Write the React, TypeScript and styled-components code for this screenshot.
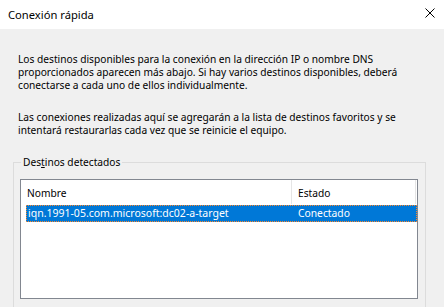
import React from "react";
import styled, { createGlobalStyle } from "styled-components";

const Global = createGlobalStyle`
  html, body { margin: 0; padding: 0; }
  body {
    width: 444px;
    height: 307px;
    overflow: hidden;
    background: #f0f0f0;
    font-family: "Noto Sans", "Liberation Sans", sans-serif;
    font-size: 10.2px;
    color: #000;
  }
`;

const Window = styled.div`
  width: 444px;
  height: 307px;
  display: flex;
  flex-direction: column;
  background: #f0f0f0;
  overflow: hidden;
`;

const TitleBar = styled.div`
  height: 29px;
  flex: none;
  background: #fff;
  display: flex;
  align-items: center;
  justify-content: space-between;
  padding: 0 8px;
`;

const Title = styled.span`
  font-size: 11.2px;
  line-height: 16px;
`;

const CloseBox = styled.span`
  width: 10px;
  height: 10px;
  margin-right: 1px;
  margin-bottom: 3px;
  display: flex;
`;

const Body = styled.div`
  padding: 24px 0 0 0;
  display: flex;
  flex-direction: column;
`;

const Paragraph = styled.p<{ $gap?: number }>`
  margin: 0 0 ${(p) => p.$gap ?? 0}px 18px;
  line-height: 13px;
  font-size: 10.2px;
  white-space: nowrap;
`;

const Group = styled.fieldset`
  margin: 0 18px 0 13px;
  padding: 0 7px 0 6px;
  border: 1px solid #dcdcdc;
  height: 160px;
  box-sizing: border-box;
  min-width: 0;
`;

const Legend = styled.legend`
  padding: 0 2px;
  margin-left: 1px;
  font-size: 10.2px;
  line-height: 14px;
`;

const ListView = styled.div`
  margin-top: 10px;
  height: 120px;
  box-sizing: border-box;
  border: 1px solid #828790;
  background: #fff;
  display: flex;
  flex-direction: column;
`;

const HeaderRow = styled.div`
  display: flex;
  height: 24px;
  flex: none;
`;

const HeaderCell = styled.div<{ $w: number }>`
  width: ${(p) => p.$w}px;
  flex: none;
  box-sizing: border-box;
  border-right: 1px solid #e5e5e5;
  padding: 1px 0 0 6px;
  display: flex;
  align-items: center;
  font-size: 10.2px;
`;

const Row = styled.div`
  display: flex;
  margin: 1px 0 0 5px;
  height: 17px;
  width: 391px;
  box-sizing: border-box;
  background: #0078d7;
  border: 1px dotted #ff8728;
  color: #fff;
`;

const Cell = styled.div<{ $w: number; $pad: number; $size: number }>`
  width: ${(p) => p.$w}px;
  flex: none;
  box-sizing: border-box;
  padding-left: ${(p) => p.$pad}px;
  font-size: ${(p) => p.$size}px;
  line-height: 15px;
  white-space: nowrap;
`;

export default function App() {
  return (
    <Window>
      <Global />
      <TitleBar>
        <Title>Conexión rápida</Title>
        <CloseBox>
          <svg width="10" height="10" viewBox="0 0 10 10">
            <path d="M0.5 0.5 L9.5 9.5 M9.5 0.5 L0.5 9.5" stroke="#000" strokeWidth="1" fill="none" />
          </svg>
        </CloseBox>
      </TitleBar>
      <Body>
        <Paragraph $gap={19}>
          Los destinos disponibles para la conexión en la dirección IP o nombre DNS
          <br />
          proporcionados aparecen más abajo. Si hay varios destinos disponibles, deberá
          <br />
          conectarse a cada uno de ellos individualmente.
        </Paragraph>
        <Paragraph $gap={18}>
          Las conexiones realizadas aquí se agregarán a la lista de destinos favoritos y se
          <br />
          intentará restaurarlas cada vez que se reinicie el equipo.
        </Paragraph>
        <Group>
          <Legend>
            Des<u>t</u>inos detectados
          </Legend>
          <ListView>
            <HeaderRow>
              <HeaderCell $w={271}>Nombre</HeaderCell>
              <HeaderCell $w={124}>Estado</HeaderCell>
            </HeaderRow>
            <Row>
              <Cell $w={265} $pad={1} $size={10.5}>iqn.1991-05.com.microsoft:dc02-a-target</Cell>
              <Cell $w={124} $pad={6} $size={10.3}>Conectado</Cell>
            </Row>
          </ListView>
        </Group>
      </Body>
    </Window>
  );
}
